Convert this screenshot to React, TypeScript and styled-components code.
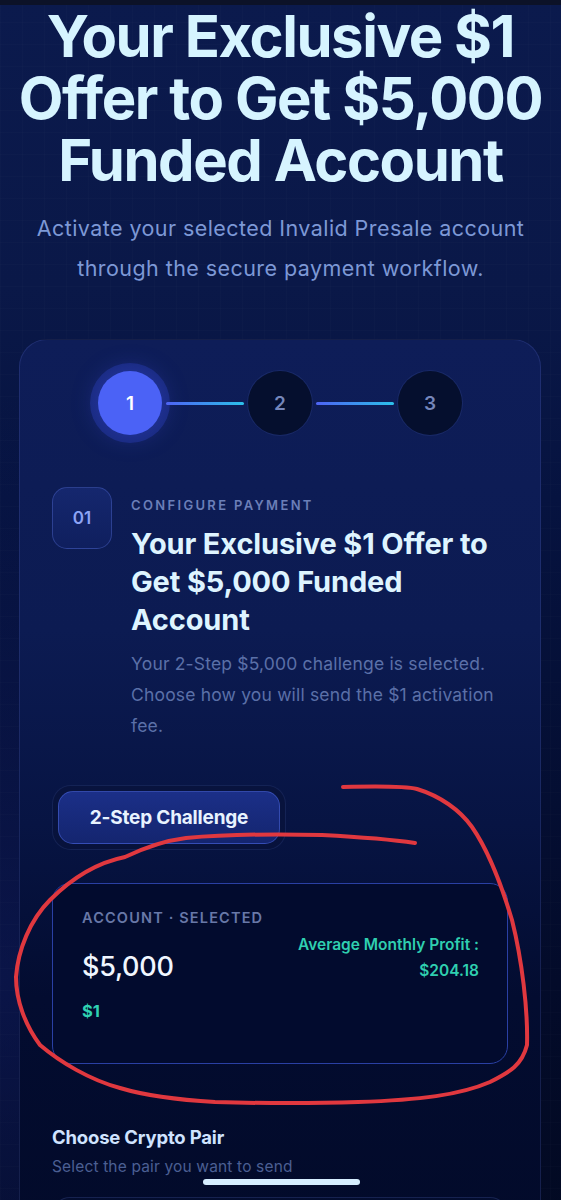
import * as React from "react";
import styled, { createGlobalStyle } from "styled-components";

const GlobalStyle = createGlobalStyle`
  html, body {
    margin: 0;
    padding: 0;
    background: #040c2a;
  }
  body {
    font-family: Inter, "Noto Sans", sans-serif;
    -webkit-font-smoothing: antialiased;
  }
  * {
    box-sizing: border-box;
  }
`;

const Page = styled.div`
  position: relative;
  min-height: 1200px;
  overflow: hidden;
  background-color: #040c2a;
  background-image: linear-gradient(rgba(255, 255, 255, 0.012) 1px, transparent 1px),
    linear-gradient(90deg, rgba(255, 255, 255, 0.012) 1px, transparent 1px),
    radial-gradient(ellipse 70% 45% at 0% 75%, rgba(16, 28, 96, 0.55) 0%, transparent 100%),
    linear-gradient(180deg, #0b1a4d 0%, #0a1848 22%, #061340 38%, #030b2a 75%, #020920 100%);
  background-size: 22px 22px, 22px 22px, 100% 100%, 100% 100%;
`;

const TopStrip = styled.div`
  height: 5px;
  background: #0c1228;
`;

const Hero = styled.h1`
  margin: 0;
  font-size: 58px;
  line-height: 62px;
  font-weight: 700;
  letter-spacing: -0.025em;
  color: #d6f4ff;
  text-align: center;
`;

const Lead = styled.p`
  margin: 17px 20px 0;
  font-size: 21.5px;
  line-height: 40px;
  letter-spacing: 0.02em;
  color: #7d98d6;
  text-align: center;
`;

const Card = styled.section`
  margin: 51px 20px 0 19px;
  padding: 31px 32px 40px;
  border-radius: 28px;
  border: 1px solid rgba(110, 130, 230, 0.18);
  background: linear-gradient(
    180deg,
    #0e1d58 0%,
    #0c1b52 30%,
    #071443 50%,
    #030c30 68%,
    #020a28 100%
  );
`;

const Stepper = styled.div`
  display: flex;
  justify-content: center;
  align-items: center;
`;

const StepDot = styled.div<{ $active?: boolean }>`
  width: 64px;
  height: 64px;
  border-radius: 50%;
  display: flex;
  align-items: center;
  justify-content: center;
  font-size: 19px;
  font-weight: 600;
  color: ${(p) => (p.$active ? "#ffffff" : "#7586bb")};
  background: ${(p) => (p.$active ? "#4b62f6" : "#050f2e")};
  box-shadow: ${(p) =>
    p.$active
      ? "0 0 0 8px rgba(52, 74, 214, 0.3), 0 0 26px rgba(70, 90, 255, 0.35)"
      : "0 0 0 1px rgba(60, 80, 150, 0.25)"};
`;

const Connector = styled.div`
  width: 78px;
  height: 3px;
  margin: 0 4px;
  border-radius: 2px;
  background: linear-gradient(90deg, #4e63f4, #2cc0ea);
`;

const StepRow = styled.div`
  display: flex;
  gap: 19px;
  margin-top: 52px;
`;

const Badge = styled.div`
  flex: none;
  width: 60px;
  height: 62px;
  border-radius: 15px;
  border: 1px solid rgba(95, 120, 230, 0.35);
  background: linear-gradient(180deg, #15276e 0%, #0f1f5e 100%);
  display: flex;
  align-items: center;
  justify-content: center;
  color: #8da4f5;
  font-size: 17px;
  font-weight: 600;
`;

const StepBody = styled.div`
  flex: 1;
  min-width: 0;
`;

const Eyebrow = styled.div`
  margin-top: 9px;
  font-size: 13px;
  line-height: 18px;
  font-weight: 600;
  letter-spacing: 0.18em;
  text-transform: uppercase;
  color: #6b7fb8;
`;

const StepTitle = styled.h2`
  margin: 11px 0 0;
  font-size: 29px;
  line-height: 38px;
  font-weight: 700;
  letter-spacing: -0.005em;
  color: #def4ff;
`;

const StepText = styled.p`
  margin: 9px 0 0;
  font-size: 17.5px;
  line-height: 31px;
  letter-spacing: 0.01em;
  color: #5b70a8;
`;

const ChoiceWrap = styled.div`
  display: inline-flex;
  margin-top: 44px;
  padding: 5px;
  border-radius: 19px;
  border: 1px solid rgba(70, 90, 170, 0.22);
  background: rgba(8, 18, 58, 0.7);
`;

const ChoiceButton = styled.button`
  width: 222px;
  height: 53px;
  border-radius: 15px;
  border: 1px solid rgba(86, 116, 240, 0.45);
  background: linear-gradient(180deg, #1b2f88 0%, #14256f 100%);
  color: #e8f3ff;
  font-family: inherit;
  font-size: 19px;
  font-weight: 700;
  letter-spacing: -0.01em;
`;

const AccountCard = styled.div`
  margin-top: 33px;
  height: 181px;
  padding: 24px 28px 0 29px;
  border-radius: 18px;
  border: 1.5px solid #2a40a4;
  background: #020b2e;
`;

const AccountLabel = styled.div`
  font-size: 14.5px;
  line-height: 20px;
  font-weight: 600;
  letter-spacing: 0.08em;
  color: #6878a8;
`;

const AccountRow = styled.div`
  display: flex;
  justify-content: space-between;
  align-items: flex-start;
  margin-top: 4px;
`;

const AccountMain = styled.div`
  margin-top: 19px;
`;

const Amount = styled.div`
  font-size: 27px;
  line-height: 32px;
  font-weight: 500;
  letter-spacing: -0.01em;
  color: #f0f6ff;
`;

const Fee = styled.div`
  margin-top: 17px;
  font-size: 16.5px;
  line-height: 22px;
  font-weight: 700;
  color: #2fd2b2;
`;

const Profit = styled.div`
  text-align: right;
  font-size: 15.5px;
  line-height: 26px;
  font-weight: 600;
  color: #2fcfb0;
`;

const SectionTitle = styled.h3`
  margin: 61px 0 0;
  font-size: 18.5px;
  line-height: 24px;
  font-weight: 700;
  letter-spacing: -0.01em;
  color: #cfe3ff;
`;

const SectionHint = styled.p`
  margin: 8px 0 0;
  font-size: 15.5px;
  line-height: 20px;
  letter-spacing: 0.01em;
  color: #4b5f93;
`;

const PairBox = styled.div`
  margin-top: 20px;
  height: 70px;
  border-radius: 18px;
  border: 1px solid rgba(80, 100, 180, 0.25);
  background: rgba(5, 15, 50, 0.6);
`;

const Scribble = styled.svg`
  position: absolute;
  top: 0;
  left: 0;
  pointer-events: none;
`;

const HomeBar = styled.div`
  position: fixed;
  left: 50%;
  bottom: 15px;
  width: 157px;
  height: 6px;
  margin-left: -78px;
  border-radius: 3px;
  background: #d6eeff;
`;

export default function App() {
  return (
    <Page>
      <GlobalStyle />
      <TopStrip />
      <Hero>
        Your Exclusive $1
        <br />
        Offer to Get $5,000
        <br />
        Funded Account
      </Hero>
      <Lead>
        Activate your selected Invalid Presale account through the secure
        payment workflow.
      </Lead>

      <Card>
        <Stepper>
          <StepDot $active>1</StepDot>
          <Connector />
          <StepDot>2</StepDot>
          <Connector />
          <StepDot>3</StepDot>
        </Stepper>

        <StepRow>
          <Badge>01</Badge>
          <StepBody>
            <Eyebrow>Configure Payment</Eyebrow>
            <StepTitle>
              Your Exclusive $1 Offer to
              <br />
              Get $5,000 Funded
              <br />
              Account
            </StepTitle>
            <StepText>
              Your 2-Step $5,000 challenge is selected. Choose how you will
              send the $1 activation fee.
            </StepText>
          </StepBody>
        </StepRow>

        <ChoiceWrap>
          <ChoiceButton>2-Step Challenge</ChoiceButton>
        </ChoiceWrap>

        <AccountCard>
          <AccountLabel>ACCOUNT · SELECTED</AccountLabel>
          <AccountRow>
            <AccountMain>
              <Amount>$5,000</Amount>
              <Fee>$1</Fee>
            </AccountMain>
            <Profit>
              Average Monthly Profit :
              <br />
              $204.18
            </Profit>
          </AccountRow>
        </AccountCard>

        <SectionTitle>Choose Crypto Pair</SectionTitle>
        <SectionHint>Select the pair you want to send</SectionHint>
        <PairBox />
      </Card>

      <Scribble width="561" height="1200" viewBox="0 0 561 1200">
        <path
          d="M343,787 C380,786 405,786 417,789 C440,796 460,810 472,827 C488,850 500,880 512,920 C522,960 528,1010 527,1045 C522,1065 510,1072 490,1082 C460,1095 420,1100 358,1102 C300,1104 250,1103 215,1102 C180,1100 150,1097 120,1088 C90,1080 60,1062 40,1045 C25,1025 16,1000 16,977 C18,950 30,920 50,900 C75,875 100,862 125,857 C150,845 170,840 186,838 C230,834 280,834 322,835 C360,837 395,840 415,843"
          fill="none"
          stroke="#e0383f"
          strokeWidth="4"
          strokeLinecap="round"
          strokeLinejoin="round"
        />
      </Scribble>
      <HomeBar />
    </Page>
  );
}
